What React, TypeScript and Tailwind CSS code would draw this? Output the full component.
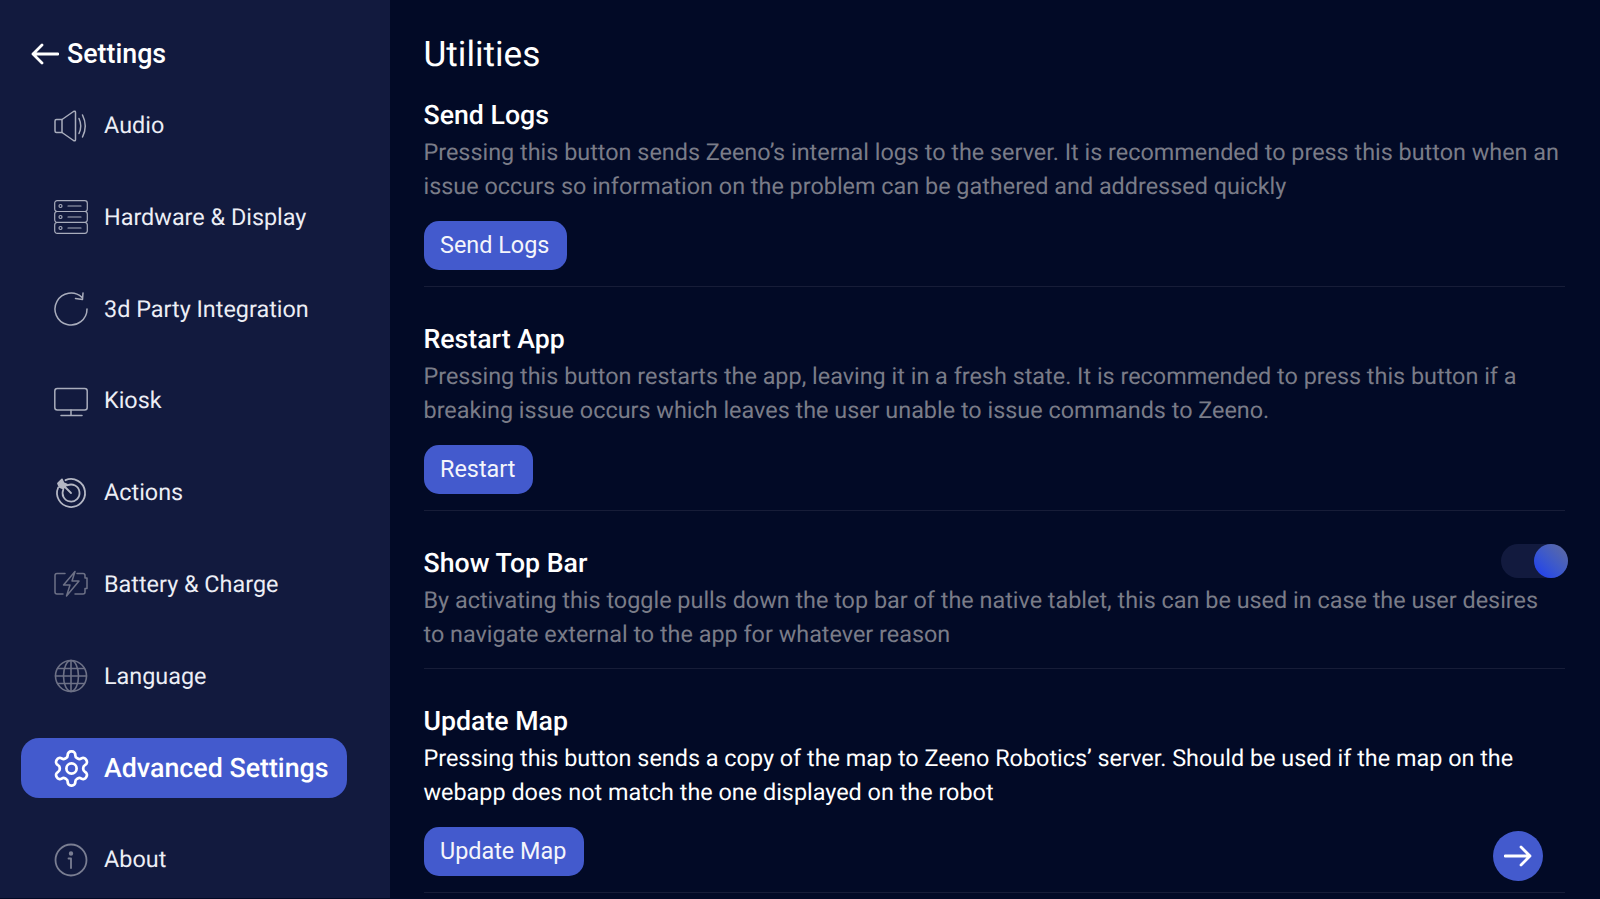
import { ReactNode } from "react";

const stroke = {
  fill: "none",
  stroke: "currentColor",
  strokeLinecap: "round" as const,
  strokeLinejoin: "round" as const,
};

const AudioIcon = () => (
  <svg viewBox="0 0 34 34" className="h-[34px] w-[34px] text-[#a9adbc]" {...stroke} strokeWidth={1.500}>
    <path d="M1 12q0-1.500 1.500-1.500H8v13H2.500q-1.500 0-1.500-1.500z" />
    <path d="M8 10.500 19.500 2.500q2-1 2 1v27q0 2-2 1L8 23.500" />
    <path d="M25 9.500q3.500 7.500 0 15" />
    <path d="M28.500 6q5.500 11 0 22" />
  </svg>
);

const HardwareIcon = () => (
  <svg viewBox="0 0 34 34" className="h-[34px] w-[34px] text-[#a9adbc]" {...stroke} strokeWidth={1.200}>
    <rect x="0.700" y="0.700" width="32.600" height="10.800" rx="2.500" />
    <rect x="0.700" y="11.500" width="32.600" height="10.800" rx="2.500" />
    <rect x="0.700" y="22.500" width="32.600" height="10.800" rx="2.500" />
    <circle cx="6.500" cy="6" r="1.500" />
    <circle cx="6.500" cy="17" r="1.500" />
    <circle cx="6.500" cy="28" r="1.500" />
    <path d="M14 6h13M14 17h13M14 28h13" />
  </svg>
);

const RefreshIcon = () => (
  <svg viewBox="0 0 34 34" className="h-[34px] w-[34px] text-[#a9adbc]" {...stroke} strokeWidth={1.500}>
    <path d="M33 17a16 16 0 1 1-5-11.600" />
    <path d="M29 1 28.500 7.500 21.500 6.500" />
  </svg>
);

const KioskIcon = () => (
  <svg viewBox="0 0 34 34" className="h-[34px] w-[34px] text-[#a9adbc]" {...stroke} strokeWidth={1.500}>
    <rect x="0.800" y="4.500" width="32.400" height="21.500" rx="2.500" />
    <path d="M17 26v5.500M7 31.500h21" />
  </svg>
);

const ActionsIcon = () => (
  <svg viewBox="0 0 34 34" className="h-[34px] w-[34px] text-[#b4b7c4]" {...stroke} strokeWidth={1.800}>
    <path d="M11.500 4.200A14 14 0 1 1 4.200 11.500" />
    <path d="M13.500 9.300A8.500 8.500 0 1 1 9.300 13.500" />
    <path d="M8 8 17 17" />
    <path d="M4 7.500 8 3.500 9.500 7 13 8.500 9 12.500 5.500 11z" fill="currentColor" />
  </svg>
);

const BatteryIcon = () => (
  <svg viewBox="0 0 34 34" className="h-[34px] w-[34px] text-[#6d7186]" {...stroke} strokeWidth={1.500}>
    <path d="M11 6.500H3q-2 0-2 2v16.500q0 2 2 2h6" />
    <path d="M23 6.500h6q2 0 2 2v2.500h2v10.500h-2V25q0 2-2 2h-8" />
    <path d="M21 4.500 9.500 18H16l-3.500 11L25 14h-7z" />
  </svg>
);

const GlobeIcon = () => (
  <svg viewBox="0 0 34 34" className="h-[34px] w-[34px] text-[#6d7186]" {...stroke} strokeWidth={1.600}>
    <circle cx="17" cy="17" r="15.500" />
    <ellipse cx="17" cy="17" rx="7.500" ry="15.500" />
    <path d="M17 1.500v31M1.500 17h31M3.500 9.500h27M3.500 24.500h27" />
  </svg>
);

const GearIcon = () => (
  <svg viewBox="0 0 24 24" className="h-[41px] w-[41px] shrink-0 text-white" {...stroke} strokeWidth={1.600}>
    <path d="M12.220 2h-.440a2 2 0 0 0-2 2v.180a2 2 0 0 1-1 1.730l-.430.250a2 2 0 0 1-2 0l-.150-.080a2 2 0 0 0-2.730.730l-.220.380a2 2 0 0 0 .730 2.730l.150.100a2 2 0 0 1 1 1.720v.510a2 2 0 0 1-1 1.740l-.150.090a2 2 0 0 0-.730 2.730l.220.380a2 2 0 0 0 2.730.730l.150-.080a2 2 0 0 1 2 0l.430.250a2 2 0 0 1 1 1.730V20a2 2 0 0 0 2 2h.440a2 2 0 0 0 2-2v-.180a2 2 0 0 1 1-1.730l.430-.250a2 2 0 0 1 2 0l.150.080a2 2 0 0 0 2.730-.730l.220-.390a2 2 0 0 0-.730-2.730l-.150-.080a2 2 0 0 1-1-1.740v-.500a2 2 0 0 1 1-1.740l.150-.090a2 2 0 0 0 .730-2.730l-.220-.380a2 2 0 0 0-2.730-.730l-.150.080a2 2 0 0 1-2 0l-.430-.250a2 2 0 0 1-1-1.730V4a2 2 0 0 0-2-2z" />
    <circle cx="12" cy="12" r="3" />
  </svg>
);

const InfoIcon = () => (
  <svg viewBox="0 0 34 34" className="h-[34px] w-[34px] text-[#7a7e92]" {...stroke} strokeWidth={1.800}>
    <circle cx="17" cy="17" r="15.500" />
    <circle cx="17" cy="10.500" r="1.300" fill="currentColor" />
    <path d="M14.500 15.500H17v9.500" />
  </svg>
);

const navItems: { label: string; icon: ReactNode; active?: boolean }[] = [
  { label: "Audio", icon: <AudioIcon /> },
  { label: "Hardware & Display", icon: <HardwareIcon /> },
  { label: "3d Party Integration", icon: <RefreshIcon /> },
  { label: "Kiosk", icon: <KioskIcon /> },
  { label: "Actions", icon: <ActionsIcon /> },
  { label: "Battery & Charge", icon: <BatteryIcon /> },
  { label: "Language", icon: <GlobeIcon /> },
  { label: "Advanced Settings", icon: <GearIcon />, active: true },
  { label: "About", icon: <InfoIcon /> },
];

const Button = ({ children }: { children: ReactNode }) => (
  <button className="h-[49px] rounded-[15px] bg-[#435ACD] pr-[18px] pl-[16.500px] text-[23.4px] leading-none text-[#f4f5fb]">
    {children}
  </button>
);

const Heading = ({ children }: { children: ReactNode }) => (
  <h2 className="h-[30px] text-[26.7px] leading-[30px] font-medium text-white">{children}</h2>
);

const Desc = ({ children, bright }: { children: ReactNode; bright?: boolean }) => (
  <p className={`mt-[5px] max-w-[1137px] text-[23.4px] leading-[34px] ${bright ? "text-white" : "text-[#7a7c88]"}`}>
    {children}
  </p>
);

export default function App() {
  return (
    <div className="flex h-[899px] w-[1600px] overflow-hidden bg-[#020A26] font-['Roboto',sans-serif] [text-rendering:geometricPrecision]">
      <aside className="h-[898px] w-[390px] shrink-0 bg-[#121A3E] pl-[21px]">
        <div className="flex h-[95px] items-start pt-[34px] pl-[10px]">
          <button className="flex h-[40px] items-center gap-[8px] text-[26.8px] font-medium text-white">
            <svg viewBox="0 0 28 22" className="h-[22px] w-[28px]" fill="none" stroke="currentColor" strokeWidth="2.800" strokeLinecap="round" strokeLinejoin="round">
              <path d="M27 11H2M11 2 2 11l9 9" />
            </svg>
            Settings
          </button>
        </div>
        <nav className="flex w-[326px] flex-col gap-[31.8px]">
          {navItems.map((item) => (
            <div
              key={item.label}
              className={`flex h-[60px] items-center gap-[16px] rounded-[18px] pt-[1px] pl-[33px] ${
                item.active ? "bg-[#435ACD] text-[26.8px] font-medium text-white" : "text-[23.4px] text-[#eceef5]"
              }`}
            >
              <span className="flex w-[34px] shrink-0 justify-center">{item.icon}</span>
              {item.label}
            </div>
          ))}
        </nav>
      </aside>

      <main className="box-content w-[1141.500px] pl-[33.500px]">
        <h1 className="flex h-[100px] items-start pt-[33px] text-[35.200px] leading-[42px] text-white">Utilities</h1>

        <section className="border-b border-[#171d38] pb-4">
          <Heading>Send Logs</Heading>
          <Desc>
            Pressing this button sends Zeeno’s internal logs to the server. It is recommended to press this button when an issue occurs so information on the problem can be gathered and addressed quickly
          </Desc>
          <div className="mt-[18px]">
            <Button>Send Logs</Button>
          </div>
        </section>

        <section className="border-b border-[#171d38] pt-[37px] pb-4">
          <Heading>Restart App</Heading>
          <Desc>
            Pressing this button restarts the app, leaving it in a fresh state. It is recommended to press this button if a breaking issue occurs which leaves the user unable to issue commands to Zeeno.
          </Desc>
          <div className="mt-[18px]">
            <Button>Restart</Button>
          </div>
        </section>

        <section className="border-b border-[#171d38] pt-[37px] pb-[17px]">
          <div className="flex items-start justify-between">
            <Heading>Show Top Bar</Heading>
            <div className="-mt-[4px] -mr-[3px] flex h-[34px] w-[67px] justify-end rounded-full bg-[#121A3E]">
              <div className="h-[34px] w-[34px] rounded-full bg-gradient-to-tr from-[#1f35f5] to-[#626a9c]" />
            </div>
          </div>
          <Desc>
            By activating this toggle pulls down the top bar of the native tablet, this can be used in case the user desires to navigate external to the app for whatever reason
          </Desc>
        </section>

        <section className="border-b border-[#171d38] pt-[37px] pb-4">
          <Heading>Update Map</Heading>
          <Desc bright>
            Pressing this button sends a copy of the map to Zeeno Robotics’ server. Should be used if the map on the webapp does not match the one displayed on the robot
          </Desc>
          <div className="mt-[18px] flex items-start justify-between">
            <Button>Update Map</Button>
            <button className="mt-[4px] mr-[22px] -mb-[5px] flex h-[50px] w-[50px] items-center justify-center rounded-full bg-[#435ACD] text-white">
              <svg viewBox="0 0 28 22" className="h-[22px] w-[28px]" fill="none" stroke="currentColor" strokeWidth="2.800" strokeLinecap="round" strokeLinejoin="round">
                <path d="M1 11h25M17 2l9 9-9 9" />
              </svg>
            </button>
          </div>
        </section>
      </main>
    </div>
  );
}
